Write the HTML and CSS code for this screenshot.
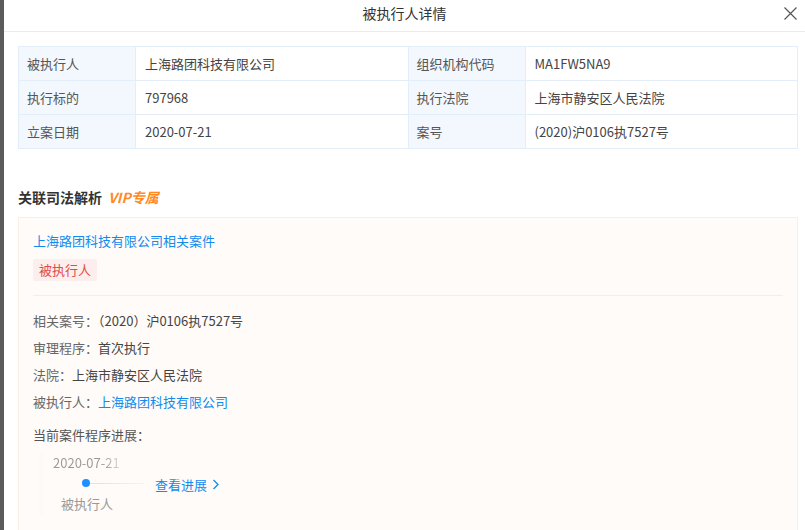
FILE: index.html
```html
<!DOCTYPE html>
<html lang="zh-CN">
<head>
    <meta charset="UTF-8">
    <title>被执行人详情</title>
    <link rel="stylesheet" href="styles.css">
</head>
<body>
    <div class="backdrop"></div>
    <div class="modal">
        <div class="modal-header">
            <span class="modal-title">被执行人详情</span>
            <button class="close-btn">
                <svg width="13" height="13" viewBox="0 0 13 13"><path d="M0.5 0.5L12.5 12.5M12.5 0.5L0.5 12.5" stroke="#555" stroke-width="1.2" fill="none"/></svg>
            </button>
        </div>

        <div class="modal-body">
            <table class="info-table">
                <tr>
                    <td class="label">被执行人</td>
                    <td class="value">上海路团科技有限公司</td>
                    <td class="label">组织机构代码</td>
                    <td class="value">MA1FW5NA9</td>
                </tr>
                <tr>
                    <td class="label">执行标的</td>
                    <td class="value">797968</td>
                    <td class="label">执行法院</td>
                    <td class="value">上海市静安区人民法院</td>
                </tr>
                <tr>
                    <td class="label">立案日期</td>
                    <td class="value">2020-07-21</td>
                    <td class="label">案号</td>
                    <td class="value">(2020)沪0106执7527号</td>
                </tr>
            </table>

            <div class="section-title">关联司法解析 <span class="vip">VIP专属</span></div>

            <div class="case-card">
                <a class="case-link">上海路团科技有限公司相关案件</a>
                <div class="tag-row"><span class="tag">被执行人</span></div>
                <div class="divider"></div>
                <div class="info-line"><span class="k">相关案号：</span>（2020）沪0106执7527号</div>
                <div class="info-line"><span class="k">审理程序：</span>首次执行</div>
                <div class="info-line"><span class="k">法院：</span>上海市静安区人民法院</div>
                <div class="info-line"><span class="k">被执行人：</span><a class="blue">上海路团科技有限公司</a></div>
                <div class="progress-title">当前案件程序进展：</div>
                <div class="timeline">
                    <div class="step">
                        <div class="step-date">2020-07-21</div>
                        <div class="step-dot"><i></i></div>
                        <div class="step-name">被执行人</div>
                    </div>
                    <a class="more">查看进展
                        <svg width="8" height="11" viewBox="0 0 8 11"><path d="M1.5 1L6 5.5L1.5 10" stroke="#128bed" stroke-width="1.3" fill="none"/></svg>
                    </a>
                </div>
            </div>
        </div>
    </div>
</body>
</html>
```

FILE: styles.css
```css
* {
    margin: 0;
    padding: 0;
    box-sizing: border-box;
}

body {
    font-family: "Noto Sans CJK SC", "Noto Sans", sans-serif;
    font-size: 13px;
    color: #333;
    display: flex;
    height: 530px;
    overflow: hidden;
    background: #fff;
}

.backdrop {
    width: 4px;
    background: #5b5b5b;
}

.modal {
    flex: 1;
    background: #fff;
}

.modal-header {
    height: 32px;
    border-bottom: 1px solid #ececec;
    display: flex;
    align-items: flex-start;
    justify-content: center;
    padding-top: 2px;
    position: relative;
}

.modal-title {
    font-size: 14px;
    color: #333;
    line-height: 22px;
}

.close-btn {
    position: absolute;
    right: 8px;
    top: 7px;
    background: none;
    border: none;
    width: 14px;
    height: 14px;
    cursor: pointer;
}

.modal-body {
    padding: 14px 7px 0 14px;
}

.info-table {
    width: 100%;
    border-collapse: collapse;
    table-layout: fixed;
}

.info-table td {
    border: 1px solid #e4eef8;
    height: 34px;
    padding: 0 8px;
    line-height: 20px;
}

.info-table td.label {
    width: 117px;
    background: #f2f8fe;
    color: #555;
}

.info-table td.value {
    color: #444;
    padding-left: 9px;
}

.section-title {
    margin-top: 38px;
    font-size: 14px;
    font-weight: bold;
    color: #333;
    line-height: 20px;
}

.vip {
    color: #ff8a1f;
    font-style: italic;
    font-weight: bold;
    margin-left: 3px;
}

.case-card {
    margin-top: 10px;
    background: #fffbf8;
    border: 1px solid #fdeee4;
    padding: 13px 14px 20px 14px;
    min-height: 330px;
}

.case-link {
    display: block;
    color: #128bed;
    line-height: 20px;
}

.tag-row {
    margin-top: 8px;
}

.tag {
    display: inline-block;
    background: #fdeeee;
    color: #e14b45;
    height: 22px;
    line-height: 22px;
    padding: 0 6px;
    border-radius: 2px;
}

.divider {
    height: 1px;
    background: #f8ece4;
    margin: 14px 0 11px 0;
}

.info-line {
    line-height: 27px;
    color: #444;
}

.info-line .k {
    color: #666;
}

.blue {
    color: #128bed;
}

.progress-title {
    margin-top: 10px;
    line-height: 20px;
    color: #555;
}

.timeline {
    display: flex;
    align-items: center;
    margin: 8px 0 0 6px;
    border-left: 4px solid #fcf9f7;
    padding-left: 10px;
}

.step {
    width: 92px;
    display: flex;
    flex-direction: column;
    align-items: flex-start;
}

.step-date {
    color: #999;
    line-height: 20px;
    background: linear-gradient(90deg, #999 75%, #ddd);
    -webkit-background-clip: text;
    -webkit-text-fill-color: transparent;
}

.step-dot {
    height: 20px;
    width: 100%;
    display: flex;
    align-items: center;
    padding-left: 29px;
}

.step-dot i {
    width: 8px;
    height: 8px;
    border-radius: 50%;
    background: #1e90ff;
    flex-shrink: 0;
}

.step-dot::after {
    content: "";
    flex: 1;
    height: 1px;
    background: linear-gradient(90deg, #cfe3f8, #eef5fc);
}

.step-name {
    color: #999;
    line-height: 22px;
    padding-left: 8px;
}

.more {
    color: #128bed;
    margin-left: 10px;
    display: flex;
    align-items: center;
    gap: 5px;
}
```
